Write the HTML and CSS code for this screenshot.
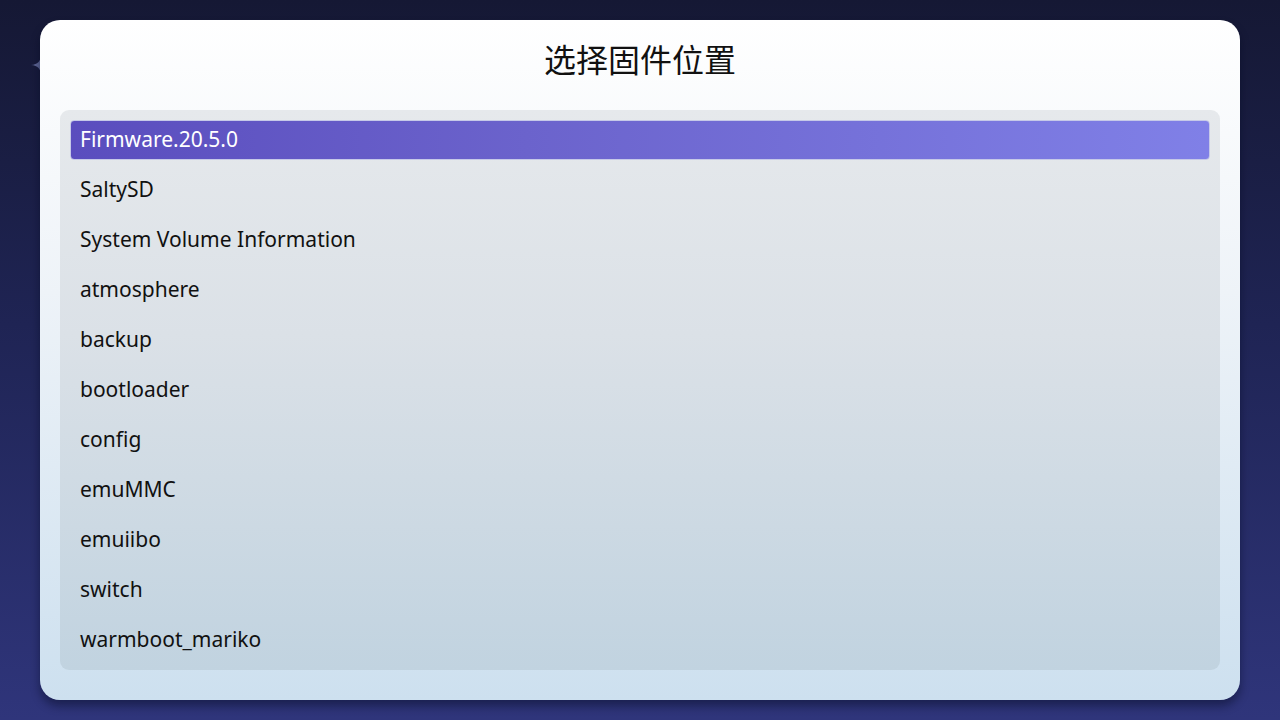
FILE: index.html
```html
<!DOCTYPE html>
<html lang="zh-CN">
<head>
<meta charset="utf-8">
<title>选择固件位置</title>
<link rel="stylesheet" href="styles.css">
</head>
<body>
<svg class="sparkle" viewBox="0 0 20 20" width="20" height="20" aria-hidden="true">
  <path d="M10 0 C10.8 7 13 9.2 20 10 C13 10.8 10.8 13 10 20 C9.2 13 7 10.8 0 10 C7 9.2 9.2 7 10 0 Z" fill="#5d6594"/>
</svg>
<main class="dialog">
  <h1 class="title">选择固件位置</h1>
  <ul class="list">
    <li class="row selected">Firmware.20.5.0</li>
    <li class="row">SaltySD</li>
    <li class="row">System Volume Information</li>
    <li class="row">atmosphere</li>
    <li class="row">backup</li>
    <li class="row">bootloader</li>
    <li class="row">config</li>
    <li class="row">emuMMC</li>
    <li class="row">emuiibo</li>
    <li class="row">switch</li>
    <li class="row">warmboot_mariko</li>
  </ul>
</main>
</body>
</html>
```
FILE: styles.css
```css
html, body {
  margin: 0;
  padding: 0;
}
body {
  width: 1280px;
  height: 720px;
  overflow: hidden;
  position: relative;
  background: linear-gradient(180deg, #151834 0%, #1f2454 45%, #2f357b 100%);
  font-family: "Noto Sans", "Noto Sans CJK SC", sans-serif;
  box-sizing: border-box;
  padding: 20px 40px;
}
.sparkle {
  position: absolute;
  left: 31px;
  top: 55px;
}
.dialog {
  position: relative;
  z-index: 1;
  height: 680px;
  box-sizing: border-box;
  border-radius: 20px;
  background: linear-gradient(180deg, #ffffff 0%, #eef3f8 40%, #cde0ef 100%);
  box-shadow: 0 6px 10px rgba(5, 8, 30, 0.45);
  padding: 18px 20px 30px;
  display: flex;
  flex-direction: column;
}
.title {
  margin: 0 0 32px;
  height: 40px;
  line-height: 40px;
  text-align: center;
  font-family: "Noto Sans CJK SC", sans-serif;
  font-weight: 400;
  font-size: 32px;
  color: #111;
}
.list {
  list-style: none;
  margin: 0;
  padding: 10px;
  border-radius: 9px;
  background: linear-gradient(180deg, #e6e9ec 0%, #dbe1e7 40%, #c1d3e0 100%);
  display: flex;
  flex-direction: column;
  gap: 10px;
}
.row {
  height: 40px;
  line-height: 38px;
  padding-left: 10px;
  font-size: 21px;
  color: #111;
  border-radius: 4px;
  box-sizing: border-box;
}
.selected {
  color: #fff;
  background: linear-gradient(90deg, #5a4dbe 0%, #6b63cc 40%, #8080e7 100%);
  border: 1px solid #c6c9e8;
  line-height: 36px;
  padding-left: 9px;
}
```
